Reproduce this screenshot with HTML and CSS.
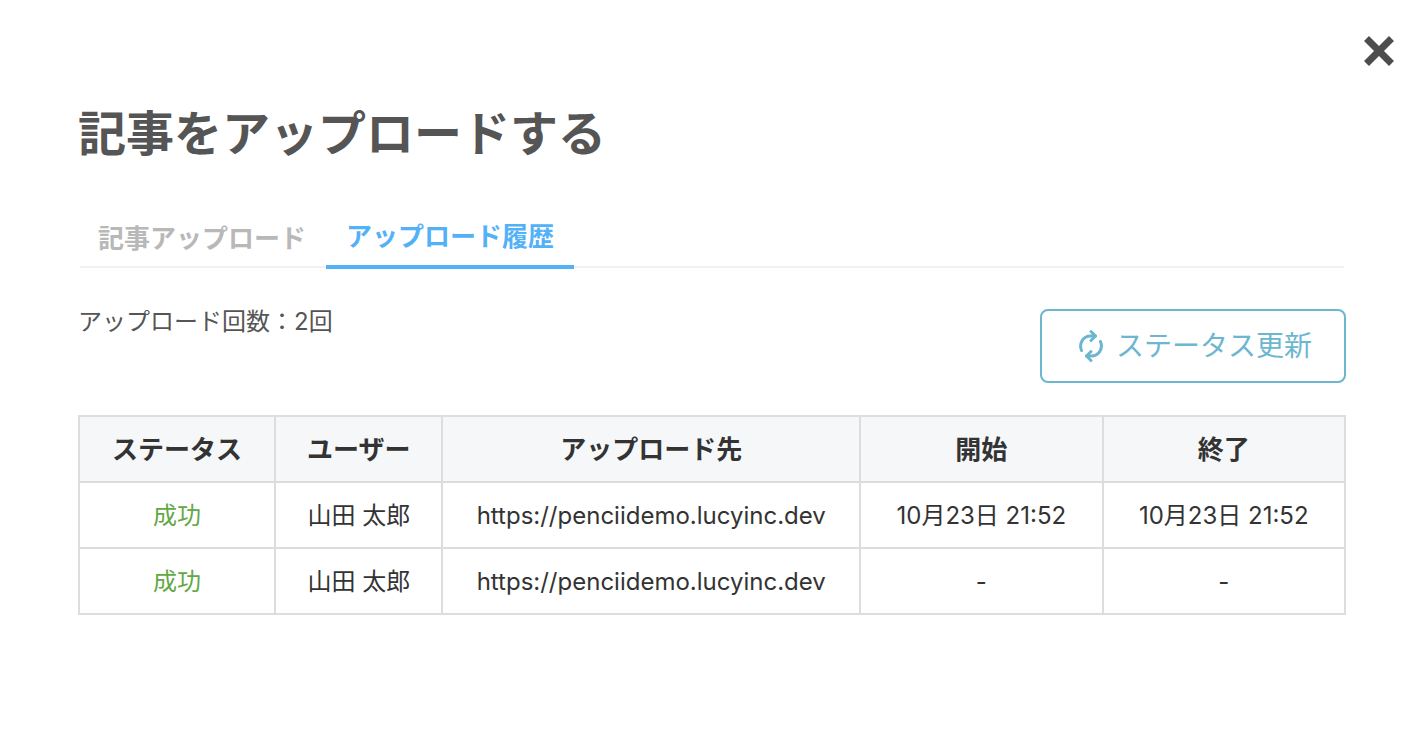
FILE: index.html
```
<!DOCTYPE html>
<html lang="ja">
<head>
  <meta charset="UTF-8">
  <meta name="viewport" content="width=device-width, initial-scale=1">
  <title>記事をアップロードする</title>
  <link rel="stylesheet" href="styles.css">
</head>
<body>
  <main class="dialog">
    <header class="dialog-header">
      <button class="close-btn" type="button" aria-label="閉じる">
        <svg viewBox="0 0 30 30" width="30" height="30" aria-hidden="true">
          <path d="M2.500 2.500L27.500 27.500M27.500 2.500L2.500 27.500" fill="none" stroke="currentColor" stroke-width="7"/>
        </svg>
      </button>
    </header>

    <h1 class="title">記事をアップロードする</h1>

    <div class="tabs" role="tablist">
      <button class="tab" type="button" role="tab" aria-selected="false">記事アップロード</button>
      <button class="tab active" type="button" role="tab" aria-selected="true">アップロード履歴</button>
    </div>

    <div class="toolbar">
      <p class="count">アップロード回数：2回</p>
      <button class="refresh-btn" type="button">
        <svg viewBox="0 0 26 34" width="26" height="34" fill="none" stroke="currentColor" stroke-width="3" stroke-linecap="round" stroke-linejoin="round" aria-hidden="true">
          <path d="M3.500 21.500C1 15.500 4 7 13 7H17.500"/>
          <path d="M13 2.500L17.500 7L13 11.500"/>
          <path d="M22.500 12.500C25 18.500 22 27 13 27H8.500"/>
          <path d="M13 22.500L8.500 27L13 31.500"/>
        </svg>
        <span>ステータス更新</span>
      </button>
    </div>

    <table class="history">
      <colgroup>
        <col class="col-status">
        <col class="col-user">
        <col class="col-url">
        <col class="col-date">
        <col class="col-date">
      </colgroup>
      <thead>
        <tr>
          <th scope="col">ステータス</th>
          <th scope="col">ユーザー</th>
          <th scope="col">アップロード先</th>
          <th scope="col">開始</th>
          <th scope="col">終了</th>
        </tr>
      </thead>
      <tbody>
        <tr>
          <td class="success">成功</td>
          <td>山田 太郎</td>
          <td>https://penciidemo.lucyinc.dev</td>
          <td>10月23日 21:52</td>
          <td>10月23日 21:52</td>
        </tr>
        <tr>
          <td class="success">成功</td>
          <td>山田 太郎</td>
          <td>https://penciidemo.lucyinc.dev</td>
          <td>-</td>
          <td>-</td>
        </tr>
      </tbody>
    </table>
  </main>
</body>
</html>
```

FILE: styles.css
```
* {
  box-sizing: border-box;
}

body {
  margin: 0;
  background: #ffffff;
  color: #555555;
  font-family: Inter, "Noto Sans CJK JP", sans-serif;
  font-size: 24px;
  line-height: 36px;
}

button {
  padding: 0;
  border: 0;
  background: none;
  font-family: inherit;
  line-height: 36px;
  cursor: pointer;
}

.dialog {
  padding: 36px 72px 36px 78px;
}

/* Close button sits in the right margin of the dialog */
.dialog-header {
  display: flex;
  justify-content: flex-end;
  margin-right: -48px;
}

.close-btn {
  display: flex;
  color: #4d4d4d;
}

.title {
  margin: 32px 0 48px;
  font-size: 48px;
  line-height: 72px;
}

/* Tabs */
.tabs {
  position: relative;
  display: flex;
  align-items: stretch;
}

.tabs::before {
  content: "";
  position: absolute;
  left: 2px;
  right: 2px;
  bottom: 1px;
  height: 2px;
  background: #f2f2f2;
}

.tab {
  position: relative;
  padding: 2px 20px 12px;
  color: #b8b8b8;
  font-size: 26px;
  font-weight: 700;
}

.tab.active {
  padding: 1px 20px 10px;
  border-bottom: 4px solid #52b1f7;
  color: #52b1f7;
}

/* Upload count and refresh */
.toolbar {
  display: flex;
  justify-content: space-between;
  align-items: flex-start;
  margin: 40px 0 32px;
}

.count {
  margin: 0;
  line-height: 26px;
}

.refresh-btn {
  display: flex;
  align-items: center;
  gap: 12px;
  height: 74px;
  padding: 0 32px 0 36px;
  border: 2px solid #6cb6cf;
  border-radius: 8px;
  color: #6cb6cf;
  font-size: 28px;
}

/* History table */
.history {
  width: 100%;
  border-collapse: collapse;
  color: #333333;
  text-align: center;
}

.history th,
.history td {
  height: 66px;
  padding: 2px 0 0;
  border: 2px solid #dddddd;
}

.history th {
  background: #f5f7f9;
  font-size: 26px;
}

.history .success {
  color: #62a844;
}

.col-status {
  width: 15.5%;
}

.col-user {
  width: 13.2%;
}

.col-url {
  width: 33%;
}
```
